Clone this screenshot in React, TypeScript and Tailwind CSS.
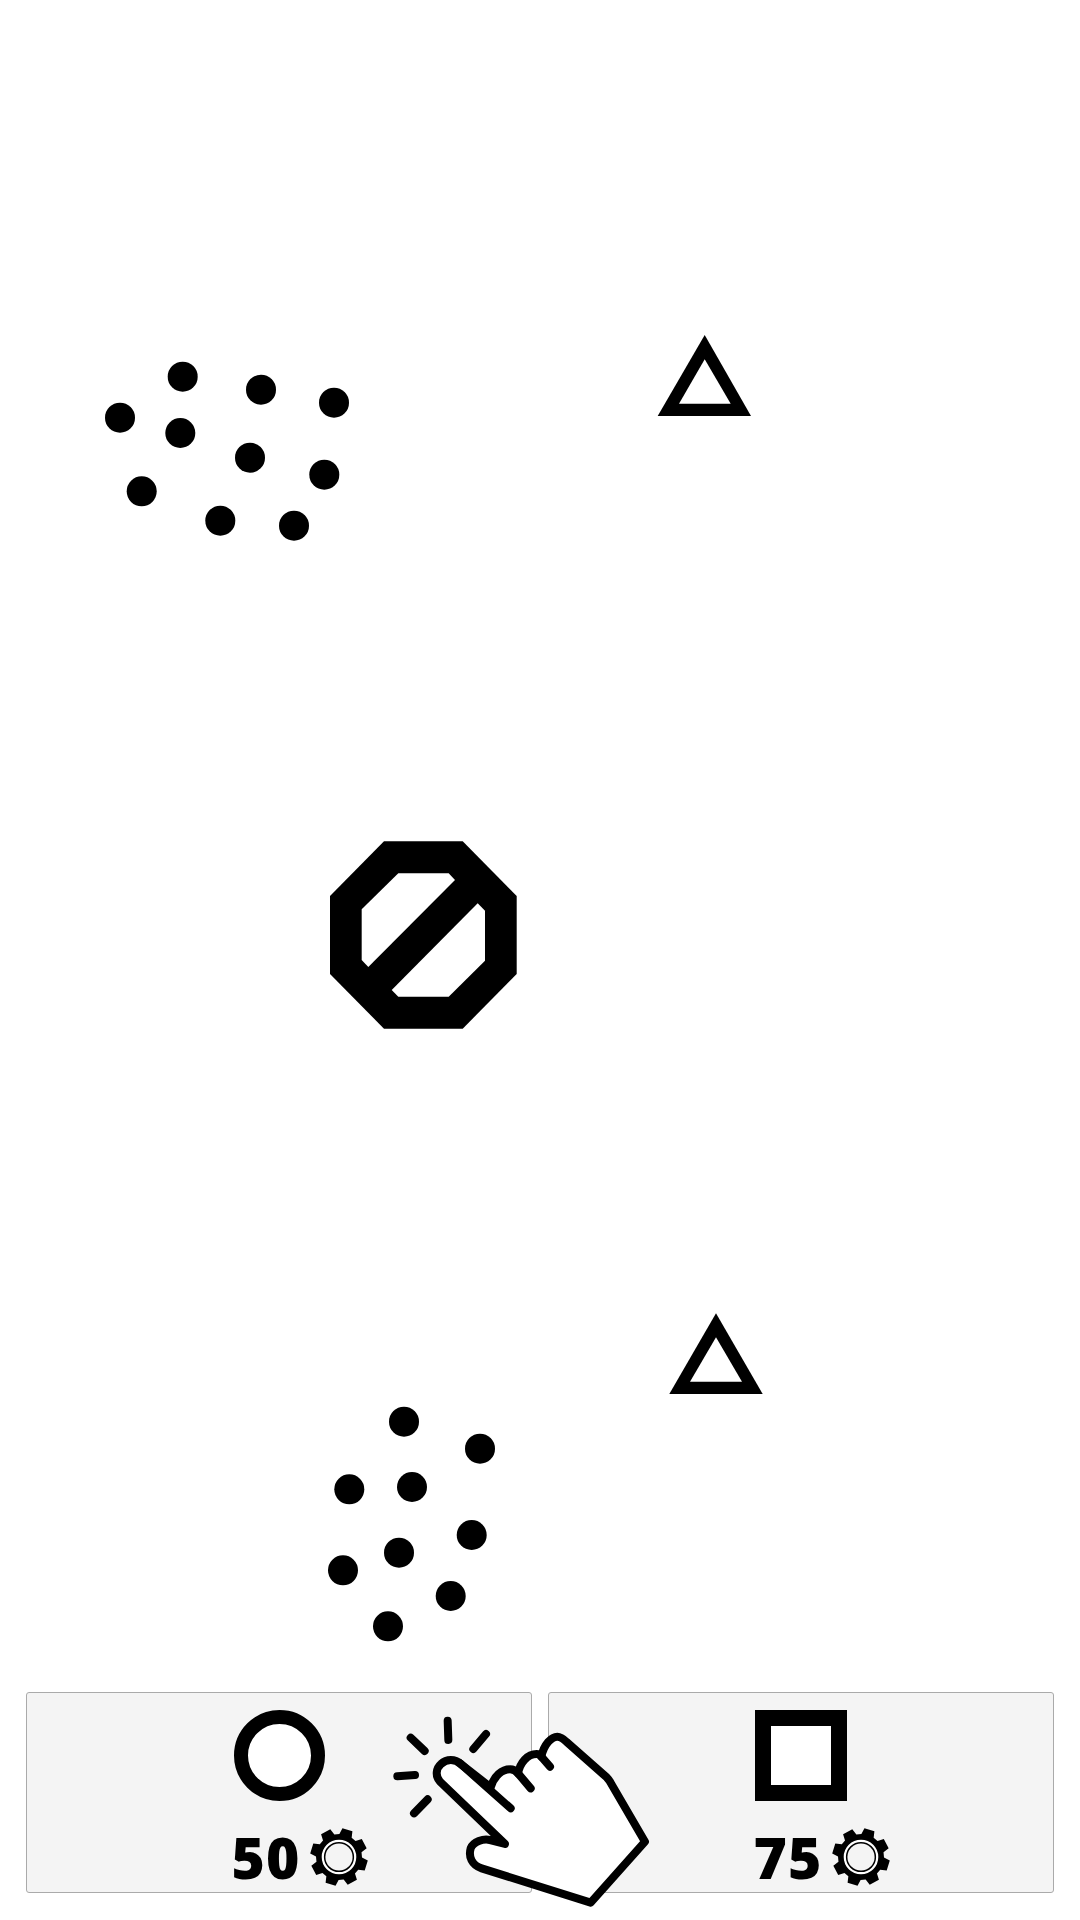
const DOTS: [number, number][] = [
  [182.7, 376.7], [261, 389.7], [334, 402.7], [120, 417.7], [180.3, 433],
  [250, 457.7], [324.3, 474.7], [141.7, 491.3], [220.3, 520.7], [294, 525.7],
  [404, 1421.7], [480, 1448.7], [349.3, 1489.3], [412, 1487], [471.7, 1535],
  [399, 1552.7], [343, 1570.3], [450.7, 1596], [388, 1626.3],
]

// 8 teeth, tapered, turned a little off axis
function gearPoints() {
  const pts: string[] = []
  const teeth = 8
  const step = (Math.PI * 2) / teeth
  for (let i = 0; i < teeth; i++) {
    const a = i * step + 0.3
    const ring: [number, number][] = [
      [-0.36, 23],
      [-0.23, 29],
      [0.23, 29],
      [0.36, 23],
    ]
    ring.forEach(([f, r]) => {
      const t = a + f * step
      pts.push(`${(30 + r * Math.cos(t)).toFixed(2)},${(30 + r * Math.sin(t)).toFixed(2)}`)
    })
  }
  return pts.join(" ")
}

function Gear() {
  return (
    <svg width="60" height="60" viewBox="0 0 60 60" className="shrink-0">
      <polygon points={gearPoints()} fill="#000" />
      <circle cx="30" cy="30" r="16.2" fill="none" stroke="#fff" strokeWidth="2.2" />
      <circle cx="30" cy="30" r="13.6" fill="#f4f4f4" />
    </svg>
  )
}

function Price({ value }: { value: number }) {
  return (
    <div className="mt-[26px] flex items-center justify-center gap-[9px] pl-[43px]">
      <span className="font-['Open_Sans',sans-serif] text-[57px] leading-[60px] font-extrabold tracking-[1px] text-black">
        {value}
      </span>
      <Gear />
    </div>
  )
}

export default function App() {
  return (
    <div className="flex h-[1920px] w-[1080px] flex-col overflow-hidden bg-white">
      {/* Playfield */}
      <svg width="1080" height="1692" viewBox="0 0 1080 1692" className="block shrink-0">
        {DOTS.map(([x, y], i) => (
          <circle key={i} cx={x} cy={y} r="15" fill="#000" />
        ))}
        <polygon points="704.7,335 657.7,416 751,416" fill="#000" />
        <polygon points="704.7,359.3 679,403.7 730.7,403.7" fill="#fff" />
        <polygon points="716,1313.3 669.3,1394 762.7,1394" fill="#000" />
        <polygon points="716,1337.3 690,1381.7 742,1381.7" fill="#fff" />
        <polygon
          points="384,841.3 462.7,841.3 516.7,896 516.7,974 462.7,1028.7 384,1028.7 330,974 330,896"
          fill="#000"
        />
        <polygon
          points="398.3,873.3 448.7,873.3 455,880 368.3,967 361.7,960 361.7,909.3"
          fill="#fff"
        />
        <polygon
          points="477.7,903.3 485,910.7 485,960.7 448.7,996.7 398.3,996.7 391.7,990"
          fill="#fff"
        />
      </svg>

      {/* Choices */}
      <div className="grid h-[201px] shrink-0 grid-cols-2 gap-[16px] px-[26px]">
        <div className="flex flex-col items-center rounded-[3px] border border-[#aaaaaa] bg-[#f4f4f4] pt-[17px]">
          <div className="h-[91px] w-[91px] rounded-full border-[14px] border-black bg-white" />
          <Price value={50} />
        </div>
        <div className="flex flex-col items-center rounded-[3px] border border-[#aaaaaa] bg-[#f4f4f4] pt-[17px]">
          <div className="h-[91px] w-[92px] border-[16px] border-black bg-white" />
          <Price value={75} />
        </div>
      </div>

      {/* Tap hint */}
      <svg
        width="280"
        height="220"
        viewBox="0 0 840 660"
        className="absolute top-[1700px] left-[380px]"
        fill="none"
        stroke="#000"
        strokeLinecap="round"
        strokeLinejoin="round"
        strokeWidth="24"
      >
        <path d="M203 62 L205 120" />
        <path d="M92 113 L134 153" />
        <path d="M318 102 L280 147" />
        <path d="M52 229 L105 225" />
        <path d="M143 298 L102 340" />
        <path
          d="M375 432 L180 245 C165 228 168 205 183 192 C200 176 225 176 242 192 L332 262 C342 228 366 208 390 208 C400 208 408 213 414 220 C420 188 442 162 470 162 C476 162 480 165 484 170 C492 132 515 110 532 110 C542 110 552 118 560 126 L680 232 C686 238 690 244 694 252 L795 425 L632 608 L305 505 C275 495 265 470 272 445 C280 425 310 415 330 420 Z"
          fill="#fff"
        />
        <path d="M240 190 L392 325" />
        <path d="M414 220 L452 265" />
        <path d="M484 170 L510 200" />
      </svg>
    </div>
  )
}
